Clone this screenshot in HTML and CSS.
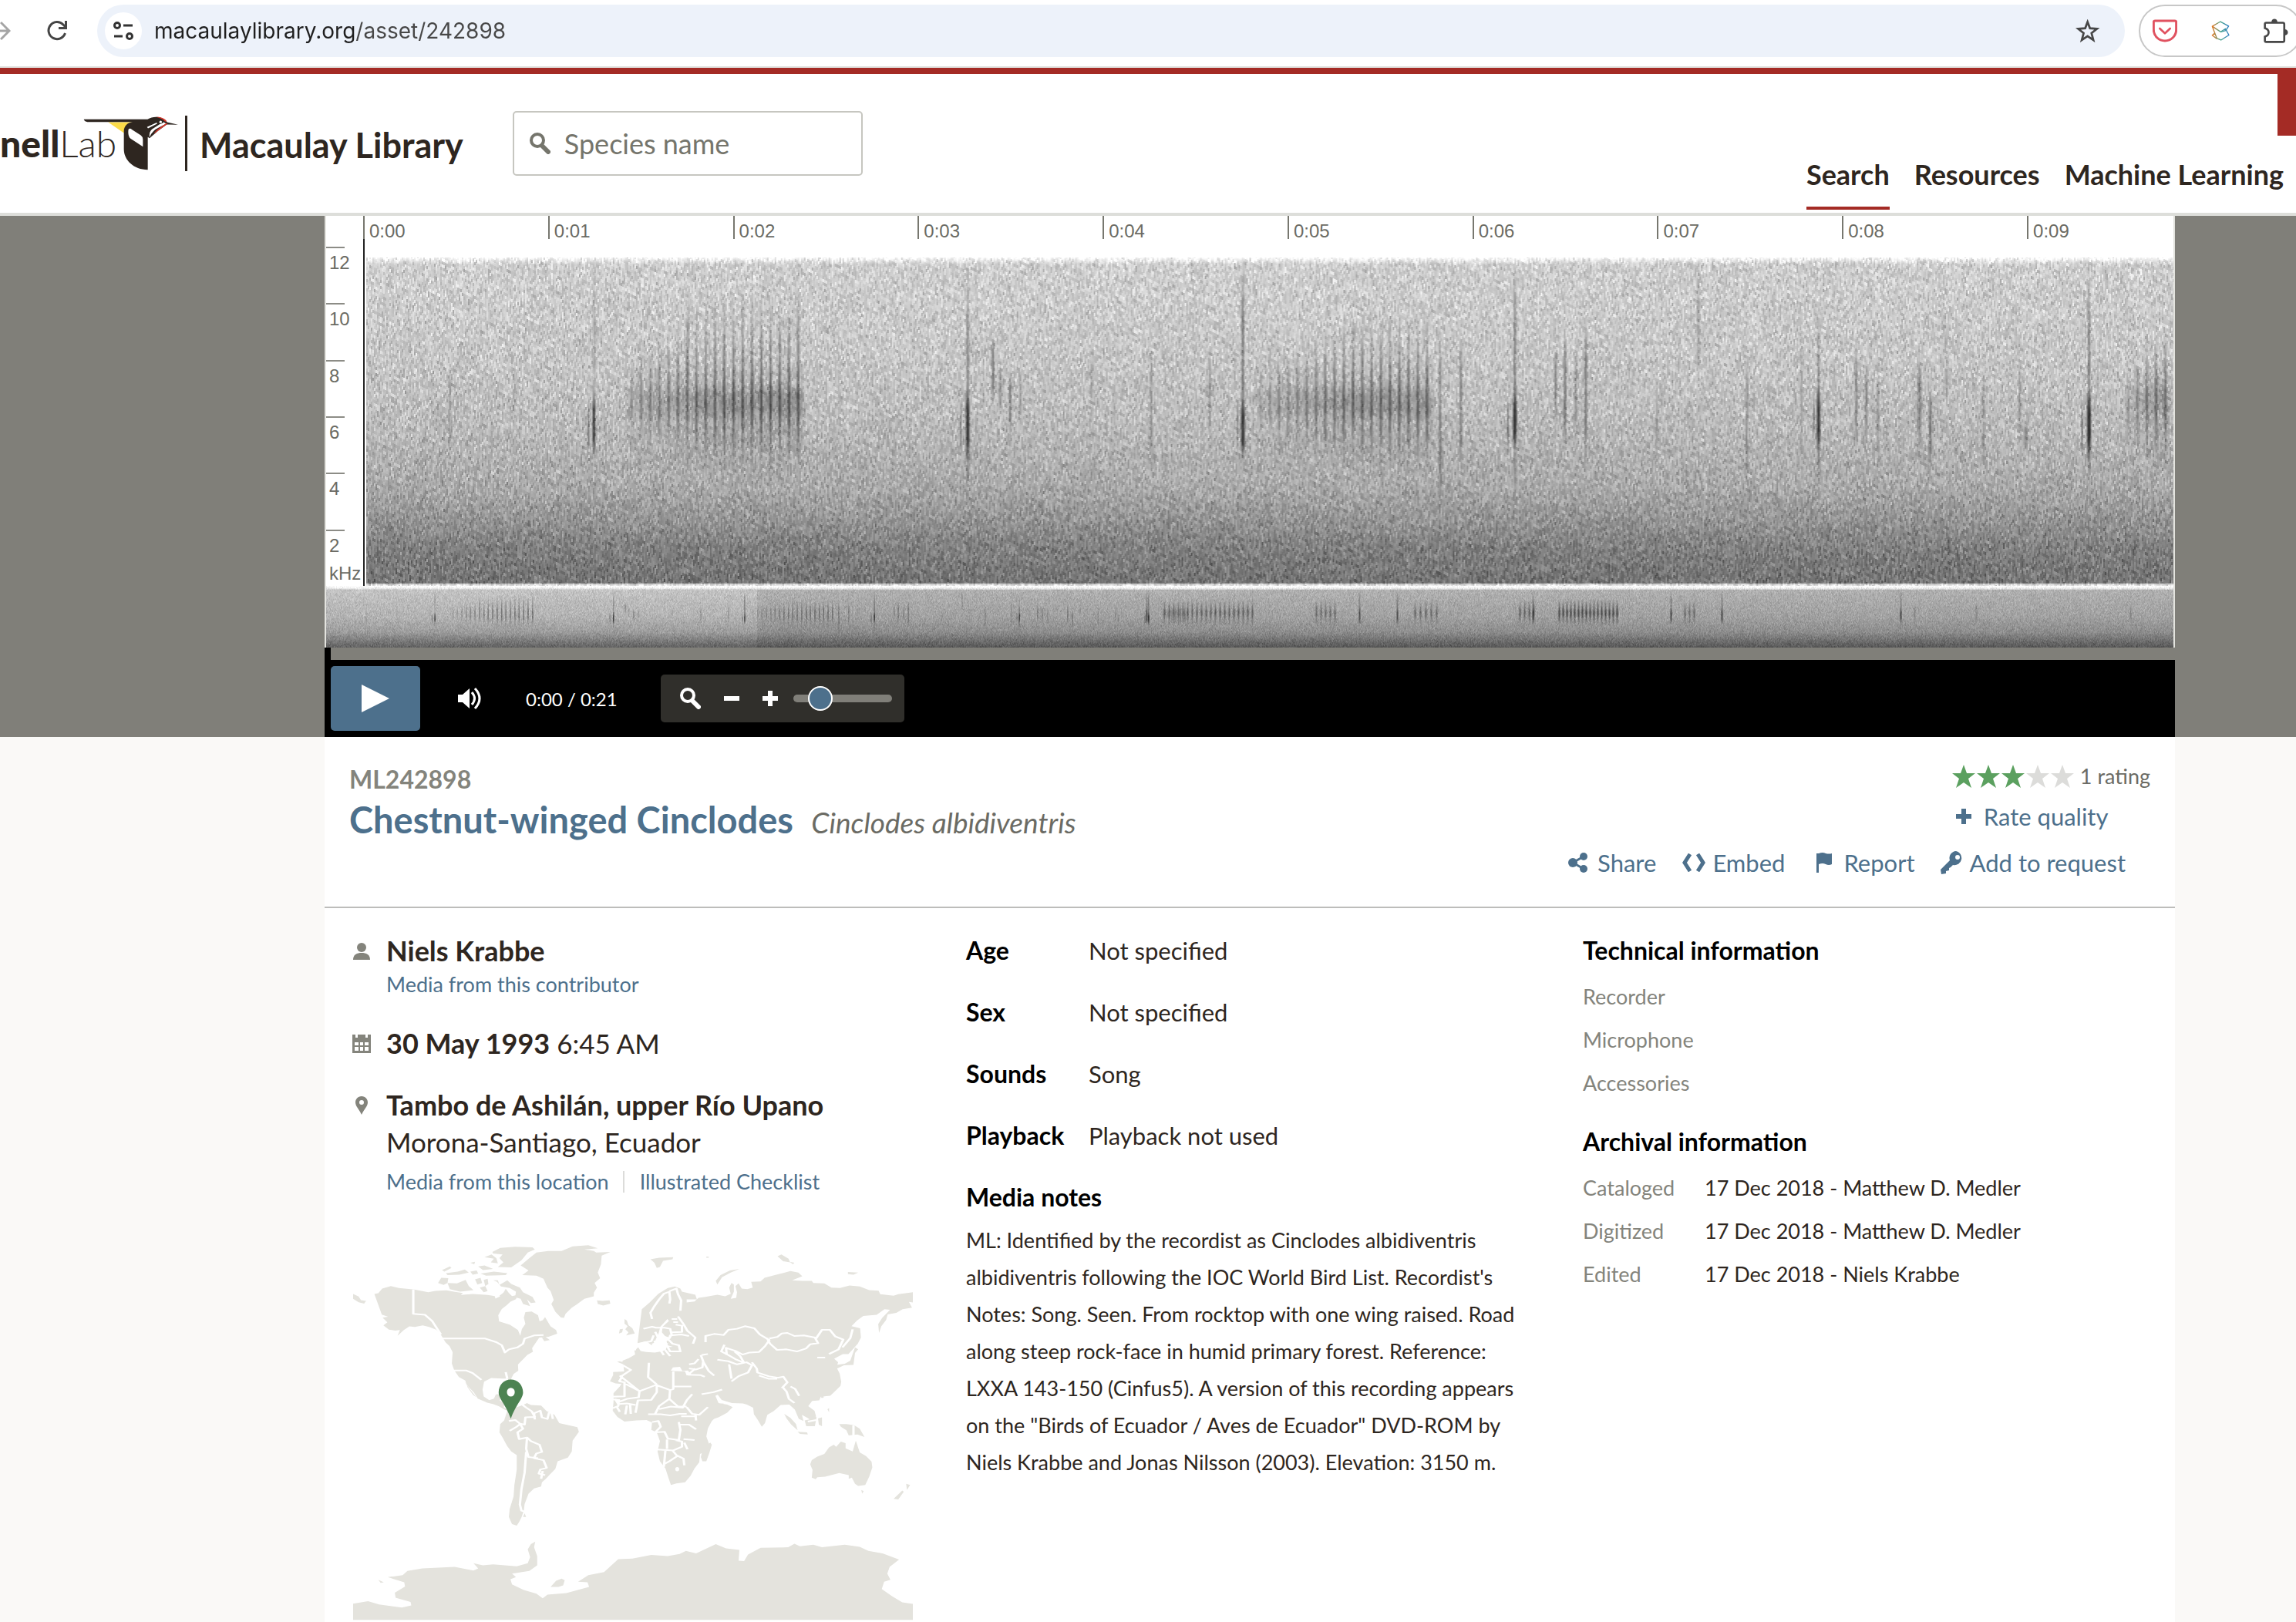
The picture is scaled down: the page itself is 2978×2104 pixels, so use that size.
FILE: index.html
```html
<!DOCTYPE html>
<html lang="en">
<head>
<meta charset="utf-8">
<title>ML242898 Chestnut-winged Cinclodes - Macaulay Library</title>
<link rel="stylesheet" href="styles.css">
</head>
<body>
<div class="browser-bar">
  <button class="bar-button" aria-label="Forward"><svg width="14" height="28" viewBox="0 0 14 28" fill="none" stroke="#a5a5a5" stroke-width="3"><path d="M0 14h12M1 3l11 11L1 25"/></svg></button>
  <button class="bar-button reload" aria-label="Reload"><svg width="28" height="28" viewBox="0 0 28 28" fill="none" stroke="#454545" stroke-width="3"><path d="M24.500 17A11 11 0 1 1 22 6l3 3"/><path d="M25.500 1v9.500H16"/></svg></button>
  <div class="address">
    <span class="site-info"><svg width="26" height="24" viewBox="0 0 26 24" fill="none" stroke="#333" stroke-width="3"><circle cx="5" cy="5" r="3.500"/><path d="M13 5h12M1 19h11"/><circle cx="21" cy="19" r="3.500"/></svg></span>
    <input class="url" type="text" aria-label="Address" value="macaulaylibrary.org/asset/242898">
    <button class="bar-button" aria-label="Bookmark"><svg width="32" height="30" viewBox="38 74 94 88" fill="none" stroke="#474747" stroke-width="8"><path d="M84 84l9 24 27 2-21 17 7 26-22-15-22 15 7-26-21-17 27-2z"/></svg></button>
  </div>
  <div class="extensions">
    <button class="bar-button" aria-label="Pocket"><svg width="32" height="30" viewBox="336 77 96 88" fill="none" stroke="#e05260" stroke-width="9"><path d="M345 82h78q5 0 5 5v29c0 25-20 44-44 44s-44-19-44-44V87q0-5 5-5z"/><path d="M364 112l20 19 20-19" stroke-width="8" stroke-linecap="round" stroke-linejoin="round"/></svg></button>
    <button class="bar-button" aria-label="Scribe"><svg width="24" height="26" viewBox="565 82 70 76" fill="none" stroke-width="4" stroke-linejoin="round"><defs><linearGradient id="rainbow"><stop offset="0" stop-color="#e0761f"/><stop offset=".5" stop-color="#4aa58c"/><stop offset="1" stop-color="#2c7fc0"/></linearGradient></defs><g stroke="url(#rainbow)"><path d="M600 85l31 17-11 17-19 5-32-21z"/><path d="M569 103l17 45 16 7 30-19-13-24-17 11M580 127l-11 10 17 13"/></g></svg></button>
    <button class="bar-button" aria-label="Extensions"><svg width="32" height="34" viewBox="773 64 98 100"><path d="M783 82h66q6 0 6 6v64q0 6-6 6h-66q-5 0-5-6v-15c20-6 20-28 0-34V88q0-6 5-6z" fill="none" stroke="#474747" stroke-width="8"/><path d="M804 80c0-18 24-18 24 0zM856 108c18 0 18 24 0 24z" fill="#474747"/></svg></button>
  </div>
</div>

<header class="site-header">
  <a class="logo" href="#">
    <span class="lab"><b>nell</b>Lab</span>
    <svg class="bird" width="125" height="72" viewBox="325 60 375 215" aria-hidden="true">
      <path fill="#fbdb49" d="M422 85h100c-20 3-35 18-39 42z"/>
      <path fill="#2e2620" d="M327 74h248c12-8 26-10 38-9 18 1 32 10 38 20l43 10-44-1-33 24-34 29-7-4v127c-55 0-93-38-93-80v-70c0-20 14-34 34-36H341q-10 0-14-10z"/>
      <path fill="#fff" d="M502 111q6-3 13 3l34 22q8 6 8 16v28l-48-31q-9-8-9-26 0-10 2-12zM573 104l36-17q7 0 2 5l-34 17zM582 143q0-22 10-30l30-20q12-3 16-8l10 6-28 14q-26 12-36 36z"/>
      <circle cx="626" cy="84" r="5" fill="#fff"/>
      <path fill="#d8362a" d="M608 65c18-2 36 6 42 17l-7 1c-8-10-20-14-35-18zM648 89l5 2-53 39q2-8 20-22z"/>
    </svg>
    <span class="product">Macaulay Library</span>
  </a>
  <label class="species-search">
    <svg width="28" height="28" viewBox="0 0 28 28" fill="none" stroke="#75756c"><circle cx="11" cy="10" r="8" stroke-width="4"/><path d="M17 17l8 8" stroke-width="6" stroke-linecap="round"/></svg>
    <input type="text" placeholder="Species name" aria-label="Species name">
  </label>
  <nav class="site-nav">
    <a class="current" href="#">Search</a>
    <a href="#">Resources</a>
    <a href="#">Machine Learning</a>
  </nav>
  <span class="corner"></span>
</header>

<main class="page">
  <section class="stage">
    <figure class="spectrogram">
      <ol class="khz-axis"><li>12</li><li>10</li><li>8</li><li>6</li><li>4</li><li>2<span>kHz</span></li></ol>
      <ol class="time-axis"><li>0:00</li><li>0:01</li><li>0:02</li><li>0:03</li><li>0:04</li><li>0:05</li><li>0:06</li><li>0:07</li><li>0:08</li><li>0:09</li></ol>
      <canvas id="detail" width="2345" height="426"></canvas>
      <canvas id="overview" width="2396" height="80"></canvas>
    </figure>
    <div class="strip"></div>
    <div class="controls">
      <button class="play" aria-label="Play"><svg width="36" height="36" viewBox="0 0 36 36"><path d="M0 0l36 18L0 36z" fill="#fff"/></svg></button>
      <button class="volume" aria-label="Volume"><svg width="32" height="30" viewBox="0 0 32 30" fill="none" stroke="#fff" stroke-width="3"><path d="M0 10h6l9-8v26l-9-8H0z" fill="#fff" stroke="none"/><path d="M18 7q7 8 0 16M22 2q12 13 0 26"/></svg></button>
      <span class="clock">0:00 / 0:21</span>
      <div class="zoom">
        <svg width="28" height="28" viewBox="0 0 28 28" fill="none" stroke="#fff"><circle cx="11" cy="10" r="8" stroke-width="4"/><path d="M17 17l8 8" stroke-width="6" stroke-linecap="round"/></svg>
        <button aria-label="Zoom out"><svg width="20" height="20" viewBox="0 0 20 20"><path d="M0 7h20v6H0z" fill="#fff"/></svg></button>
        <button aria-label="Zoom in"><svg width="20" height="20" viewBox="0 0 20 20"><path d="M0 7h20v6H0zM7 0h6v20H7z" fill="#fff"/></svg></button>
        <input type="range" min="0" max="100" value="20" aria-label="Zoom level">
      </div>
    </div>
  </section>

  <section class="asset">
    <div class="heading">
      <div class="titles">
        <p class="catalog">ML242898</p>
        <h1><a href="#">Chestnut-winged Cinclodes</a> <em>Cinclodes albidiventris</em></h1>
      </div>
      <div class="tools">
        <div class="rating">
          <p class="stars">
            <svg width="158" height="30" viewBox="0 0 158 30" aria-hidden="true"><defs><path id="star" d="M15 0l4 11h11l-9 7 4 12-10-7-10 7 4-12-9-7h11z"/></defs><g fill="#5ba05f"><use href="#star"/><use href="#star" x="32"/><use href="#star" x="64"/></g><g fill="#dcdcda"><use href="#star" x="96"/><use href="#star" x="128"/></g></svg>
            1 rating
          </p>
          <button class="tool rate"><svg width="20" height="20" viewBox="0 0 20 20"><path d="M0 7h20v6H0zM7 0h6v20H7z"/></svg>Rate quality</button>
        </div>
        <div class="actions">
          <button class="tool share"><svg width="26" height="26" viewBox="0 0 26 26"><circle cx="6" cy="13" r="6"/><circle cx="20" cy="5" r="5"/><circle cx="20" cy="21" r="5"/><path d="M6 13L20 5M6 13l14 8" stroke="#4d708c" stroke-width="3"/></svg>Share</button>
          <button class="tool embed"><svg width="32" height="24" viewBox="0 0 32 24" fill="none" stroke="#4d708c" stroke-width="5"><path d="M11 1L4 12l7 11M21 1l7 11-7 11"/></svg>Embed</button>
          <button class="tool report"><svg width="20" height="26" viewBox="0 0 20 26"><path d="M0 1h3v25H0zM3 1q5-2 9 0 4 1 8 0v14q-4 2-8 0-4-2-9 0z"/></svg>Report</button>
          <button class="tool request"><svg width="30" height="30" viewBox="0 0 30 30"><path fill-rule="evenodd" d="M20 0a9 9 0 1 1-4 18l-3 3-2 1v3l-4 1v3l-6 1-1-6 12-12A9 9 0 0 1 20 0zm2 5a3 3 0 1 0 .1 6 3 3 0 0 0-.1-6z"/></svg>Add to request</button>
        </div>
      </div>
    </div>

    <div class="columns">
      <div class="col where">
        <div class="fact">
          <svg width="24" height="24" viewBox="0 0 24 24"><ellipse cx="12" cy="7" rx="6" ry="6"/><path d="M1 23c0-7 5-9 11-9s11 2 11 9z"/></svg>
          <div><p class="big"><b>Niels Krabbe</b></p><p class="links"><a href="#">Media from this contributor</a></p></div>
        </div>
        <div class="fact">
          <svg width="24" height="24" viewBox="0 0 24 24"><path fill-rule="evenodd" d="M0 0h4v4h3V0h10v4h3V0h4v24H0zM3 10v4h5v-4zm7 0v4h4v-4zm6 0v4h5v-4zM3 16v5h5v-5zm7 0v5h4v-5zm6 0v5h5v-5z"/></svg>
          <p class="big"><b>30 May 1993</b> 6:45 AM</p>
        </div>
        <div class="fact">
          <svg width="24" height="24" viewBox="0 0 24 24"><path fill-rule="evenodd" d="M12 0c5 0 8 4 8 8 0 5-5 9-8 16C9 17 4 13 4 8c0-4 3-8 8-8zm0 5a3 3 0 1 0 0 6 3 3 0 0 0 0-6z"/></svg>
          <div><p class="big"><b>Tambo de Ashilán, upper Río Upano</b></p><p class="big">Morona-Santiago, Ecuador</p>
          <p class="links spaced"><a href="#">Media from this location</a><a href="#">Illustrated Checklist</a></p></div>
        </div>
        <svg class="map" viewBox="74 100 1423 1460" preserveAspectRatio="none" role="img" aria-label="World map">
          <g fill="#e4e3dd">
            <path d="M74 293l14 10 6 14 13 3-5 10-14-5-14-13zM128 293l10-3 10-18 22-10 20 8 40 6 35 10 18-5 28-2 22 6 20 4-5 8 30-4 38 4 18 4 2 10 16-12 10-26 8 16 8 12 14-4-4 16-14 10-10 14-12 14-9 24 2 24 28 14 20 20 6 22 4-26 9-20-4-24 4-22 16-2 16 14 4 24 8-4 6-12 14 36 14 14 3 14-22 12-24 4-8 18-10 22 2 14-14 12-10 16-14 22 1 24-12 12-6 18 2 24-4 8-7-32-14 0-28-2-18 14-4 32 3 26 14 14 12-6 5-16 14-2-4 26 12 6-2 20 10 10 22-4 4 12-14-2-18-6-16-14-14-8-16-6-24-16-10-24-14-22-12-24 14 30 18 34-8-8-14-30-6-26-16-14-12-26-6-26 2-44-8-24-10-14-12-30-12-20-18-10-16-6-20 6-14-2-14 14-16 22 6-22-12 2-16-4-14-16 10-12-12-18 14-4-16-8z"/>
            <path d="M290 250l8-20 18 2-2 18-10 8zM314 250l24 2 22-14 8 24 12 16-34 6-26-10zM300 200l20-14 4 6-18 14zM310 212l30-6 18-8 10 12-24 8-30 2zM372 206l16-4 4 12-14 4zM398 214l34-8 34 6-4 8-50 2zM372 172l12-4-2 10zM392 186l16-4 22 14-26 4zM384 236l14-6 4 20-12 6zM396 268l14-6 6 20-10 4zM408 150l18-10 12 14 4 20-18-4 8-14zM428 130l20-16 38-4 44 2 6 8-18 12-16 30-26 28-34-2 14-18-10-16 8-14-24-4zM406 238l10-4 2 20-8 8zM430 240l12 0 4 18 20-18 10 14 22 14 8 18 24 18 8 22-12 2-10-14 8 26-18-8-6-20-14-6 2-22-16-14-22-6-10-18zM446 300l12-14 14 20-18 6zM554 462l8-4 12 14-14 4z"/>
            <path d="M500 182l22-28 18-22 30-6 34 0 28-18 40-4 24 12-34 4 24 6 6 6 36-2-22 14-2 34-8 32 6 22-14 18 6 18-8 20 0 14-24 10-20 22-12 12-16 24-4 16-8-2-14-22-10-30 6-16-8-34-8-14-10-34-18-12-36-2 16-18z"/>
            <path d="M694 318l14 2 18-2 2 12-18 8-14-6zM830 158l22-6 36-2-2 8-24 6-8 24-8 4-6-20zM972 148h6v4h-6zM1153 146l10-6 18 16 4 14-18-4zM1184 168l12 4-4 6zM996 242l12-22 24-18 24-6-22 14-22 18-12 28zM1332 208l26 2-12 8-14-2z"/>
            <path d="M752 430l8-2-2 14-8 4zM764 390l6 6 4 18 10 12 6 20-22 8 6-12-8-12 6-12-8-10z"/>
            <path d="M808 352l20-26 22-34 24-22 18-6 14 8 4 12 34 12 4 18-26 0 0 12 20-4 10-14 18-4 16-4 14-4 20 6 14-10-4-24 6-18 6 6 0 28-8 28 14-4 2-22-4-24 8-10 8 20 14 2 14-6-4-22 24-2 10-14 26-10 40-16 20 6 10 14-26 16 26 2 24 0 4 8 28 2 18 16 22 2 24-10 26 4 24 14 24 2 4 14 34 6 12-6L1497 286v40l-10-2 8 22-24 6-16 14-22 6-4 22-12 24-6 26-2-34 10-24 20-32-14-2-20 22-34 4-16 18-14 22 22 8 2 36-8 24-14 24-10 16-14 0-12 10-10 8 10 14-4 20 8 24 4 32-2 16-16 24-10 14-24 4-4 14-18 2-10 20 16 18 4 22-10 18-12-12-14-12 4 24-12-8-10-36-14-20-22 2-18 24-16 14-6 32-8 14-10-26-10-22-2-26-16-12-10-4-28-2-26-12-10-20-6 4 8 28 22 6 14 10-14 22-22 18-28 14-4-24-20-30-10-24-16-22 2-36-30 0-24-4-12-16 12-16 32-4 30-2-10-18-14 2-6-16-18 2-6 14-8 12 6 20-12 14-10-10-2-24-24-20-2 10 24 30-6 8-8-18-24-26-10 4-12 6-18 10-2 18-16 16-16-2-14-8 8-24 0-12 28-2-2-28-16-10 14-4 16-10 16-14-2-16 10-12 6 14 14 4 22 2 22-6 4-14 20-2-14-6-2-16 10-12-14-8-8-14 2-22 16-22-4-8-18 30-4 24-10 34-8 14-14-16-22 8z"/>
            <path d="M764 562l10 6 22-8 22 0 6 24 22 2 10 14 14-12 22 4 26 2 6 24 20 48 16 44 24 12 32-4-10 38-20 30-10 28-4 32 8 34-6 22-18 12-2 32-12 24-10 28-14 26-22 4-14 6-6-26-8-38-14-28-6-38 6-40-8-34-14-10 2-28-14-10-26 2-30 4-18-18-12-24 2-34 0-34 16-26 14-32zM982 870l4 8-6 30-8 34-10 0-4-16 4-24 8-18zM1104 738l6 8-4 6z"/>
            <path d="M508 722l8-6 10 8 26 2 14 22 20 14 12 32 24 8 22 8 4 18-16 34-2 42-10 24-26 14-6 30-14 22-10 16-10 14-2 16-18 8-14 20-10 40-2 26-6 26-6 18-6 14-12-6-8-28 2-30 10-50 2-44 6-60 0-56-14-14-10-20-12-34-8-20 2-32 10-14 8-38z"/>
            <path d="M1170 758l16 16 14 24 4 24-16-22-12-24zM1204 828l24 2 2 8-20-2zM1222 784l12-4 12-16 6 8-4 34-22 0zM1256 776l10-4 0 34-8-6zM1310 798l18 0 20 4 14 14 12 32-18-10-22 4-6-20-14-14zM1280 740l4-4 0 16zM1264 680h6v16h-6zM1266 632l2 20-4-2zM1350 500l8 8-8 14-4 46-24 2-20 14 0-16 22-4 14-12zM1280 546l14-8 2 24-8 8zM1350 430h4v60h-4zM1366 1054l6 4-4 10zM1480 1030l10 4-8 20zM1470 1056l4 4-14 30-12-2zM510 1144l4 14-8 0z"/>
            <path d="M1240 938l14-14 18-10 12-26 12-10 6 8 12-20 12 6 0 20 18 12 8-42 10 46 16 14 14 22 2 22-8 36-10 32-18 4-8-8-8-24-8 4 0-14-24-8-36 14-20 2-4 8-10-6 2-30-6-22z"/>
            <path d="M74 1558V1495L112 1485L140 1498L198 1510L222 1502L220 1488L182 1472L180 1452L206 1428L204 1412L162 1392L200 1384L212 1368L250 1358L332 1352L380 1366L392 1358L380 1338L404 1346L430 1342L490 1350L518 1338L524 1314L518 1284L526 1264L537 1254L534 1276L542 1310L542 1346L522 1368L478 1378L488 1392L474 1400L478 1420L508 1442L540 1456L556 1474L568 1460L616 1454L674 1430L670 1412L646 1410L672 1384L712 1372L728 1350L748 1322L784 1320L832 1306L874 1310L904 1302L920 1290L946 1300L996 1264L1022 1280L1056 1286L1054 1328L1068 1330L1078 1304L1110 1278L1180 1276L1196 1262L1210 1272L1244 1266L1266 1276L1324 1266L1362 1274L1384 1290L1420 1300L1462 1324L1438 1352L1432 1378L1440 1402L1424 1410L1418 1438L1444 1466L1470 1490L1497 1496V1558zM576 1430l14-24 14-8 8 6-4 20-12 6zM138 1402l14 10-8 2z"/>
          </g>
          <g class="borders">
            <path d="M227 276v94l30 4 18 24 22 52M298 466h112l28 14 14 12 8 28 10-12 22-8 14-14 4-20 24-12 24-2M328 590h34l16 10 22 26M462 596l4 26"/>
            <path d="M470 786l16-4 12 14 12 4 2-28 24-2-8-22-14-14-12-14M536 780l-2-24 16-10 4 26 14 6 4-24 6-2 4 26M498 796l8 20-14 14 4 26 20-6 10 14 22 14 6 28-14 6-6 18 24 8 8 30-16 6-4 16 16 6M472 824l16-14 12-14M516 852l-2 42 6 32 24 4M514 906l-4 80-8 64-4 60 4 24 10 4M556 980l-4 30"/>
            <path d="M834 390l-4-24 10-26 12-26 12-22 14-8 2 30-2 16M878 282l18-10 4 22 8 24-2 40M900 380l14 30 10 26 20 26-6 24M812 428l22-8 10 4 22 0 14 4 4 24-6 12-28 0-8-24M884 442l26-2 0-24-16-4M878 466l2-12 28-4 20 6M838 454l-6 22-20 6M838 478l20-4 18-4 10 16 16 6 4 24-26 0-8-22-14-10-24 4M872 484l-6 24 14 26M784 466l10 20-4 26M758 516l-2 40M850 500l14 30M884 390h14M888 402h12"/>
            <path d="M970 480l0-24 22-8 24 4 12-20 22-4 20-10 24 8 14 24 24 22-10 22-16 24-24 2-18 8-18-14-24-12 2 28M1018 490l-8 26 18 14 18 16 22 14-10-26-14-18M1000 548l28 6 22 12 24-8 14 12-10 28-24 14-18 20M1030 566l6 56M1088 558l12 24 2 16 28 14 24 6 14-4 10 22-14 22M1106 610l24 12 22 0M1132 466l20-6 12-14 14-2 18 12 24-2 28 8 8 22-20 4-10 16-24 12-26-8-24 2-18-24-8-22M1250 468l16-36 20 0 14 26 20 12-12 38-24 18M1344 430l-6 34-20 36M1166 654l10 18 6 28 14 16M1186 652l12 10 10 26M1254 540l20 0M958 530l6 24-2 24-16 8-18-4M928 566l14-4 10-16M964 556l14 36 14 18M944 582l-18 24 32 2 10 6M960 682l30-8 22-10M960 530l16-4M1230 788l22-6M1346 802v40"/>
            <path d="M752 610l50 60 42-24 36 20 8-4v-68M888 652h46M826 560l-2 56 22 28M760 570l20 18-22 22-6 20-4 0M750 632l14 4 0 54-38 2M764 640l38 30-2 24-30 6-24 14M846 646l0 28-14 30-34 2-6 48M880 664l-2 36-26 28-10 30M852 740l30-10 30 4 10-28 14-24M878 700l22 30 22 0M922 732l14 26 18 4 22-30M824 760l32 0 24 4 24-6 18 0M834 790l16-4 6 22-14 22M842 830l24-2 8 26 28 6 4-40-4-30M908 768h40M906 800l22 0 18 18M944 760l2 24M838 896l50 4 22-14 0-20-16-6M872 858v36M868 900l-4 64M886 900l12 22-20 20-12 10M898 920l16 12 2 26M914 856l28 4M916 870l8 26M720 700l30 4-2 24-14 8M750 720l20-2 22 6M770 726l-4 34M778 718l2 40M740 700l8 20M744 730l8 20"/>
          </g>
          <ellipse cx="898" cy="973" rx="5" ry="8" fill="#fff"/>
          <path fill="#4d8352" fill-rule="evenodd" d="M475 625c18 0 31 22 31 50 0 24-18 46-31 102-13-56-31-78-31-102 0-28 13-50 31-50zm0 32a10 17 0 1 0 0 34 10 17 0 0 0 0-34z"/>
        </svg>
      </div>

      <div class="col">
        <dl class="traits"><dt>Age</dt><dd>Not specified</dd><dt>Sex</dt><dd>Not specified</dd><dt>Sounds</dt><dd>Song</dd><dt>Playback</dt><dd>Playback not used</dd></dl>
        <h2>Media notes</h2>
        <p class="notes">ML: Identified by the recordist as Cinclodes albidiventris<br>albidiventris following the IOC World Bird List. Recordist's<br>Notes: Song. Seen. From rocktop with one wing raised. Road<br>along steep rock-face in humid primary forest. Reference:<br>LXXA 143-150 (Cinfus5). A version of this recording appears<br>on the "Birds of Ecuador / Aves de Ecuador" DVD-ROM by<br>Niels Krabbe and Jonas Nilsson (2003). Elevation: 3150 m.</p>
      </div>

      <div class="col">
        <h2>Technical information</h2>
        <dl class="records"><dt>Recorder</dt><dd></dd><dt>Microphone</dt><dd></dd><dt>Accessories</dt><dd></dd></dl>
        <h2>Archival information</h2>
        <dl class="records"><dt>Cataloged</dt><dd>17 Dec 2018 - Matthew D. Medler</dd><dt>Digitized</dt><dd>17 Dec 2018 - Matthew D. Medler</dd><dt>Edited</dt><dd>17 Dec 2018 - Niels Krabbe</dd></dl>
      </div>
    </div>
  </section>
</main>
<script src="spectrogram.js"></script>
</body>
</html>
```
FILE: styles.css
```css
* { box-sizing: border-box; }
body {
  margin: 0;
  min-height: 100vh;
  display: flex;
  flex-direction: column;
  overflow-x: hidden;
  background: #fff;
  color: #2e2620;
  font-family: Lato, "Open Sans", sans-serif;
  font-size: 27px;
}
p, h1, h2, dl, dd, ol, figure { margin: 0; padding: 0; }
ol { list-style: none; }
a { color: #4d708c; text-decoration: none; }
b { font-weight: 700; }
button { padding: 0; border: 0; background: none; font: inherit; color: inherit; }
svg { display: block; flex: none; }

/* Browser toolbar */
.browser-bar {
  display: flex;
  align-items: center;
  height: 88px;
  padding: 0 0 6px;
  border-bottom: 2px solid #dfdfdc;
  overflow: hidden;
}
.reload { margin: 0 38px 0 46px; }
.address {
  flex: 1;
  display: flex;
  align-items: center;
  height: 68px;
  padding: 0 32px 0 10px;
  border-radius: 34px;
  background: #edf2fa;
}
.site-info {
  display: grid;
  place-items: center;
  width: 48px;
  height: 48px;
  border-radius: 24px;
  background: #fff;
}
.url {
  flex: 1;
  margin: 0;
  padding: 0 0 0 16px;
  border: 0;
  color: #1f1f1f;
  font: 28px/40px Inter, "Liberation Sans", sans-serif;
  background: linear-gradient(90deg, #1f1f1f 276px, #474747 276px);
  -webkit-background-clip: text;
  background-clip: text;
  -webkit-text-fill-color: transparent;
}
.extensions {
  display: flex;
  align-items: center;
  gap: 44px;
  width: 212px;
  height: 68px;
  margin: 0 -8px 0 18px;
  padding-left: 16px;
  border: 2px solid #c7c7c7;
  border-radius: 34px;
}

/* Site header */
.site-header {
  display: flex;
  align-items: flex-start;
  height: 192px;
  padding-top: 48px;
  border-top: 8px solid #a42b25;
  border-bottom: 4px solid #dddeda;
}
.logo { display: flex; align-items: center; height: 84px; color: #2e2620; }
.lab { width: 108px; font-size: 48px; font-weight: 300; line-height: 48px; white-space: nowrap; }
.lab b { font-weight: 900; }
.bird { margin-right: 7px; }
.product {
  padding: 4px 0 0 16px;
  border-left: 3px solid #2e2620;
  font-size: 45px;
  font-weight: 700;
  line-height: 68px;
  white-space: nowrap;
}
.species-search {
  display: flex;
  align-items: center;
  gap: 18px;
  width: 454px;
  height: 84px;
  margin-left: 64px;
  padding-left: 19px;
  border: 2px solid #c6c6c0;
  border-radius: 5px;
}
.species-search input {
  width: 360px;
  padding: 0;
  border: 0;
  outline: 0;
  font: 36px/48px Lato, sans-serif;
}
.species-search input::placeholder { color: #75756c; opacity: 1; }
.site-nav { display: flex; gap: 32px; align-self: flex-end; margin: 0 16px 4px auto; }
.site-nav a {
  padding-bottom: 18px;
  border-bottom: 4px solid transparent;
  color: #2e2620;
  font-size: 36px;
  font-weight: 700;
  line-height: 48px;
}
.site-nav .current { border-color: #a42b25; }
.corner { position: absolute; right: 0; top: 96px; width: 24px; height: 80px; background: #a42b25; }

/* Page columns: gutters around the asset */
.page { flex: 1; display: flex; flex-direction: column; }
.stage, .asset { margin: 0; padding: 0 calc(100% * 157 / 2978) 0 calc(100% * 421 / 2978); }
.stage { background: #807f79; }
.asset { flex: 1; display: flex; flex-direction: column; background: #faf9f7; }

/* Spectrogram */
.spectrogram {
  display: grid;
  grid-template-columns: 50px 1fr;
  grid-template-rows: 54px 426px 80px;
  border: 0 solid #e4e4df;
  border-width: 0 2px;
  background: #fff;
  color: #6b6b64;
  font: 24px/28px "Liberation Sans", Arial, sans-serif;
}
.khz-axis {
  grid-row: 1 / 3;
  display: flex;
  flex-direction: column;
  padding-top: 40px;
  border-right: 2px solid #222;
}
.khz-axis li { flex: 1; padding-left: 4px; }
.khz-axis li::before { content: ""; display: block; width: 24px; height: 2px; margin: 0 0 5px -4px; background: #8c8c86; }
.khz-axis span { display: block; margin-top: 8px; }
.time-axis { display: flex; overflow: hidden; margin-left: -2px; }
.time-axis li {
  flex: none;
  width: calc(100% * 240 / 2350);
  height: 30px;
  padding: 6px 0 0 6px;
  border-left: 2px solid #77776f;
}
canvas { display: block; width: 100%; height: 100%; min-width: 0; }
#detail { padding-left: 2px; }
#overview { grid-column: 1 / 3; }
.strip { height: 16px; border-left: 8px solid #000; }
.controls { display: flex; align-items: center; height: 100px; padding: 8px; background: #000; color: #fff; }
.play { display: grid; place-items: center; width: 116px; height: 84px; border-radius: 5px; background: #4d708c; }
.volume { margin: 0 56px 0 49px; }
.clock { width: 175px; font-size: 24px; white-space: nowrap; }
.zoom { display: flex; align-items: center; gap: 30px; height: 62px; padding: 0 16px 0 24px; border-radius: 5px; background: #302f2b; }
.zoom input {
  width: 128px;
  height: 10px;
  margin: 0 0 0 -10px;
  border-radius: 5px;
  background: #807f79;
  -webkit-appearance: none;
  appearance: none;
}
.zoom input::-webkit-slider-thumb {
  -webkit-appearance: none;
  width: 32px;
  height: 32px;
  border: 2px solid #fff;
  border-radius: 16px;
  background: #4d708c;
}

/* Title block */
.heading {
  display: flex;
  justify-content: space-between;
  padding: 31px 32px 37px;
  border-bottom: 2px solid #bdbdbb;
  background: #fff;
}
.titles { padding-top: 4px; }
.catalog { color: #84847c; font-size: 32px; font-weight: 700; line-height: 40px; margin-bottom: 4px; }
h1 { font-size: 47px; line-height: 56px; font-weight: 700; white-space: nowrap; }
h1 em { margin-left: 12px; color: #6b6b64; font-size: 37px; font-weight: 400; }
.tools { display: flex; flex-direction: column; align-items: flex-end; gap: 20px; line-height: 40px; }
.rating { display: flex; flex-direction: column; align-items: flex-start; gap: 12px; }
.stars { display: flex; align-items: center; gap: 8px; color: #6b6b64; }
.tool { display: flex; align-items: center; gap: 12px; color: #4d708c; font-size: 31px; line-height: 40px; fill: #4d708c; white-space: nowrap; }
.rate { margin-left: 5px; gap: 16px; }
.actions { display: flex; gap: 33px; padding-right: 32px; }
.embed, .request { gap: 8px; }
.report { gap: 15px; margin-left: 8px; }

/* Details */
.columns { flex: 1; display: grid; grid-template-columns: repeat(3, 1fr); background: #fff; }
.col { min-width: 0; padding: 31px 0 0 32px; }
.where { display: flex; flex-direction: column; gap: 32px; }
.fact { display: flex; gap: 20px; padding-left: 4px; }
.fact > svg { margin-top: 13px; fill: #84847c; }
.big { font-size: 35px; line-height: 48px; white-space: nowrap; }
.big b { font-size: 36px; }
.links { display: flex; line-height: 40px; white-space: nowrap; }
.spaced { margin-top: 8px; }
.links a + a { margin-left: 18px; padding-left: 22px; background: linear-gradient(#dcdcda, #dcdcda) 0 50% / 2px 28px no-repeat; }
.map { width: calc(100% - 42px); height: 488px; margin: 29px 0 0 5px; }
.borders { fill: none; stroke: #fff; stroke-width: 6; stroke-linejoin: round; }
h2, .traits { color: #000; font-size: 32px; font-weight: 700; line-height: 48px; }
.traits { display: grid; grid-template-columns: 159px 1fr; row-gap: 32px; margin-bottom: 32px; }
.traits dd { color: #2e2620; font-size: 31px; font-weight: 400; }
.notes { margin-top: 8px; line-height: 48px; white-space: nowrap; }
.records { display: grid; grid-template-columns: 158px 1fr; grid-auto-rows: 56px; margin: 8px 0 24px; line-height: 56px; white-space: nowrap; }
.records dt { color: #84847c; }
```
FILE: spectrogram.js
```javascript
// Click marks: x, top, bottom, darkness, half width (detail canvas units)
const clicks = [
  [295, 0, 200, .2, 2], [295, 170, 262, .85, 2], [288, 180, 260, .35, 1],
  [417, 40, 190, .18, 2], [108, 130, 280, .18, 2], [191, 120, 230, .12, 2],
  [780, 0, 330, .35, 2], [780, 170, 265, .8, 3], [771, 180, 260, .35, 1],
  [813, 95, 190, .4, 2], [822, 130, 210, .25, 2], [835, 140, 240, .35, 2], [848, 140, 220, .25, 2],
  [1018, 110, 280, .25, 2], [1094, 110, 250, .25, 2], [940, 120, 220, .15, 2],
  [1137, 0, 250, .45, 2], [1137, 180, 265, .85, 3], [1130, 180, 260, .35, 1],
  [1393, 80, 340, .35, 2], [1420, 100, 280, .35, 2],
  [1490, 0, 320, .4, 2], [1490, 170, 250, .8, 3], [1481, 180, 260, .4, 1],
  [1543, 110, 220, .35, 2], [1555, 90, 260, .4, 2], [1569, 110, 240, .3, 2], [1582, 80, 280, .4, 2],
  [1728, 0, 170, .25, 2], [1674, 150, 280, .15, 2], [1791, 110, 310, .25, 2], [1862, 80, 290, .2, 2],
  [1884, 60, 320, .35, 2], [1884, 170, 250, .75, 3], [1878, 170, 240, .3, 1],
  [1933, 100, 260, .3, 2], [1946, 130, 250, .35, 2], [1961, 130, 270, .25, 2],
  [2015, 120, 260, .4, 3], [2029, 160, 280, .4, 2], [2050, 90, 200, .15, 2], [2098, 130, 280, .2, 2],
  [2145, 130, 240, .25, 2], [2153, 210, 250, .3, 3], [2053, 340, 410, .2, 2],
  [2235, 0, 320, .4, 2], [2235, 170, 265, .9, 3], [2226, 180, 260, .4, 1]
];
function trill(list, from, to, top, bottom, dark) {
  for (let x = from; x <= to; x += 12) {
    const p = (x - from) / (to - from);
    const s = dark * Math.min(1, .35 + p * 1.2);
    const rise = Math.min(1, .3 + p * 1.4);
    list.push([x, 160 - (160 - top) * rise, 210 + (bottom - 210) * rise, s * .6, 2]);
    list.push([x, 130, 240, s * .4, 2]);
    list.push([x, 165, 212, s * .4, 9]);
    list.push([x, 130, 280, s * .18, 10]);
  }
}
trill(clicks, 344, 570, 45, 290, .6);
trill(clicks, 1160, 1378, 70, 285, .52);
trill(clicks, 2286, 2345, 90, 280, .45);

// The overview carries the same marks at a smaller scale, then the rest of the clip
const later = [];
for (const [x, t, b, d, half] of clicks) {
  if (half < 9) later.push([x * .477, 5 + t * .17, 5 + b * .17, d * .8, 1]);
}
function burst(from, to, step, dark) {
  for (let x = from; x <= to; x += step) {
    later.push([x, 17, 52, dark, 1]);
    later.push([x, 29, 41, dark * .8, 2]);
  }
}
burst(1087, 1205, 6, .3); burst(1284, 1312, 6, .25); burst(1412, 1440, 7, .25);
burst(1548, 1566, 6, .3); burst(1599, 1674, 5, .42); burst(1762, 1775, 6, .25);
for (const x of [1064, 1340, 1389, 1565, 1744, 1810, 2042]) later.push([x, 5, 50, .25, 1], [x, 28, 50, .5, 1]);
for (const x of [2060, 2140, 2340]) later.push([x, 22, 48, .2, 1]);

function paint(id, marks, shade, cellW, cellH, noise) {
  const canvas = document.getElementById(id);
  const ctx = canvas.getContext("2d");
  const w = canvas.width, h = canvas.height;
  const image = ctx.createImageData(w, h);
  const dark = new Float32Array(w * h);
  for (const [cx, top, bottom, strength, half] of marks) {
    const soft = (bottom - top) * .3 + 1;
    for (let y = Math.max(0, top | 0); y < Math.min(h, bottom); y++) {
      const edge = Math.min(1, (y - top + 1) / soft, (bottom - y) / soft);
      for (let x = Math.max(0, Math.ceil(cx - half)); x <= Math.min(w - 1, cx + half); x++) {
        const i = y * w + x;
        dark[i] = 1 - (1 - dark[i]) * (1 - strength * edge * (1 - Math.abs(x - cx) / (half + 1)));
      }
    }
  }
  let seed = 242898;
  const random = () => (seed = (seed * 1664525 + 1013904223) >>> 0) / 4294967296;
  const cols = Math.ceil(w / cellW) + 1, rows = Math.ceil(h / cellH) + 2;
  const grain = Float32Array.from({ length: cols * rows }, () => (random() + random() + random()) / 1.5 - 1);
  for (let y = 0; y < h; y++) {
    for (let x = 0; x < w; x++) {
      const c = (x / cellW) | 0;
      const r = ((y + (c * 7) % cellH) / cellH) | 0;
      let v = shade(y / h, x / w) + grain[r * cols + c] * noise;
      v *= 1 - dark[y * w + x] * .85;
      const i = (y * w + x) * 4;
      image.data[i] = image.data[i + 1] = image.data[i + 2] = v;
      image.data[i + 3] = 255;
    }
  }
  ctx.putImageData(image, 0, 0);
}
function ramp(stops, t) {
  for (let i = 1; i < stops.length; i++) {
    if (t <= stops[i][0]) {
      const [a, va] = stops[i - 1], [b, vb] = stops[i];
      return va + (vb - va) * (t - a) / (b - a);
    }
  }
  return stops[stops.length - 1][1];
}
const detailStops = [[0, 250], [.02, 206], [.3, 198], [.5, 187], [.7, 168], [.8, 148], [.88, 128], [.99, 116], [.993, 200], [1, 245]];
const overviewStops = [[0, 255], [.03, 240], [.06, 195], [.5, 178], [.75, 155], [.9, 118], [1, 95]];
paint("detail", clicks, t => ramp(detailStops, t), 2, 4, 48);
paint("overview", later, (t, u) => ramp(overviewStops, t) * (u > .233 && t > .05 ? .9 : 1), 1, 2, 26);
```
